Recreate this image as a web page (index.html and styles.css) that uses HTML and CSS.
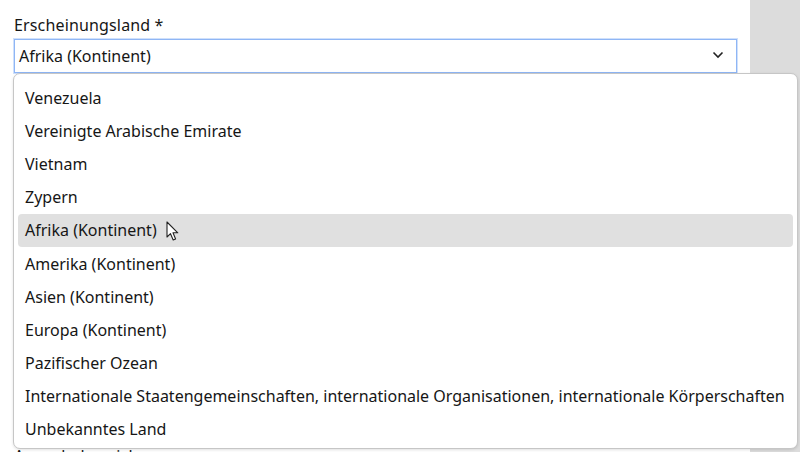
FILE: index.html
```html
<!DOCTYPE html>
<html lang="de">
<head>
<meta charset="utf-8">
<title>Erscheinungsland</title>
<link rel="stylesheet" href="styles.css">
</head>
<body>
<div class="page">
  <main class="form">
    <div class="field">
      <label class="label">Erscheinungsland *</label>
      <div class="select">
        <span class="value">Afrika (Kontinent)</span>
        <svg class="chevron" width="12" height="8" viewBox="0 0 12 8"><path d="M1.5 1.5 L6 6 L10.5 1.5" fill="none" stroke="#222" stroke-width="1.6"/></svg>
      </div>
    </div>
    <div class="field next">
      <label class="label">Ausgabebezeichnung</label>
    </div>
  </main>
  <aside class="side"></aside>

  <ul class="listbox">
    <li class="option">Venezuela</li>
    <li class="option">Vereinigte Arabische Emirate</li>
    <li class="option">Vietnam</li>
    <li class="option">Zypern</li>
    <li class="option active">Afrika (Kontinent)</li>
    <li class="option">Amerika (Kontinent)</li>
    <li class="option">Asien (Kontinent)</li>
    <li class="option">Europa (Kontinent)</li>
    <li class="option">Pazifischer Ozean</li>
    <li class="option">Internationale Staatengemeinschaften, internationale Organisationen, internationale Körperschaften</li>
    <li class="option">Unbekanntes Land</li>
  </ul>

  <svg class="cursor" width="14" height="21" viewBox="0 0 14 21"><path d="M1 1 L1 16 L4.5 12.7 L7.2 19 L9.6 18 L7 11.8 L11.8 11.8 Z" fill="#fff" stroke="#222" stroke-width="1.1" stroke-linejoin="round"/></svg>
</div>
</body>
</html>
```

FILE: styles.css
```css
* { box-sizing: border-box; }
html, body { margin: 0; padding: 0; }
body {
  font-family: "Noto Sans", "Open Sans", sans-serif;
  font-size: 16px;
  color: #161616;
  background: #fff;
  width: 800px;
  height: 452px;
  overflow: hidden;
}
.page {
  position: relative;
  display: flex;
  width: 800px;
  height: 452px;
}
.form {
  width: 750px;
  padding: 14px 13px 0 14px;
}
.side {
  flex: 1;
  background: #dcdcdc;
}
.field { display: flex; flex-direction: column; }
.label {
  line-height: 22px;
  margin-bottom: 3px;
  letter-spacing: 0.15px;
}
.select {
  height: 34px;
  border: 1px solid #8fb6f5;
  box-shadow: 0 0 0 1px #cfe0fb;
  display: flex;
  align-items: center;
  justify-content: space-between;
  padding: 0 12px 0 4px;
  background: #fff;
}
.chevron { display: block; margin-top: -2px; }
.next { margin-top: 372px; }

.listbox {
  position: absolute;
  left: 13px;
  top: 73px;
  width: 785px;
  height: 376px;
  margin: 0;
  padding: 7px 4px 0 4px;
  list-style: none;
  background: #fff;
  border: 1px solid #c6c6c6;
  border-radius: 7px;
  box-shadow: 0 1px 3px rgba(0,0,0,0.12);
  overflow: hidden;
}
.option {
  height: 33.2px;
  display: flex;
  align-items: center;
  padding: 0 7px;
  white-space: nowrap;
  border-radius: 4px;
}
.option.active { background: #e0e0e0; }
.cursor {
  position: absolute;
  left: 166px;
  top: 221px;
}
```
